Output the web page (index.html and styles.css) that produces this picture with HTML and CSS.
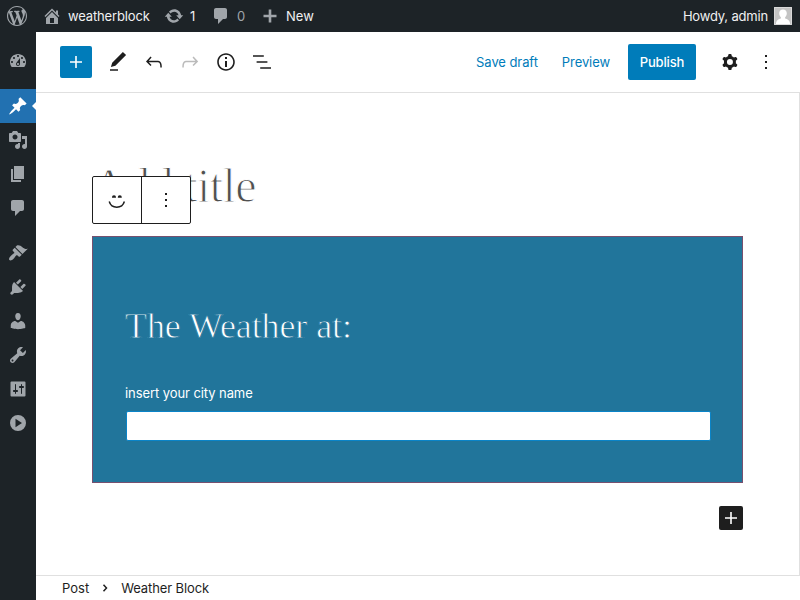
FILE: index.html
```html
<!DOCTYPE html>
<html lang="en">
<head>
<meta charset="utf-8">
<title>Edit Post</title>
<link rel="stylesheet" href="styles.css">
</head>
<body>
<header class="adminbar">
  <svg class="dash wp-logo" viewBox="0 0 20 20"><path d="M20 10c0-5.51-4.49-10-10-10C4.48 0 0 4.49 0 10c0 5.52 4.48 10 10 10 5.51 0 10-4.48 10-10zM7.78 15.37L4.37 6.22c.55-.02 1.17-.08 1.17-.08.5-.06.44-1.13-.06-1.11 0 0-1.45.11-2.37.11-.18 0-.37 0-.58-.01C4.12 2.69 6.87 1.11 10 1.11c2.33 0 4.45.87 6.05 2.34-.68-.11-1.65.39-1.65 1.58 0 .74.45 1.36.9 2.1.35.61.55 1.36.55 2.46 0 1.49-1.4 5-1.4 5l-3.03-8.37c.54-.02.82-.17.82-.17.5-.05.44-1.25-.06-1.22 0 0-1.44.12-2.38.12-.87 0-2.33-.12-2.33-.12-.5-.03-.56 1.2-.06 1.22l.92.08 1.26 3.41zM17.41 10c.24-.64.74-1.87.43-4.25.7 1.29 1.05 2.71 1.05 4.25 0 3.29-1.73 6.24-4.4 7.78.97-2.59 1.94-5.2 2.92-7.78zM6.1 18.09C3.12 16.65 1.11 13.53 1.11 10c0-1.3.23-2.48.72-3.59C3.25 10.3 4.67 14.2 6.1 18.09zm4.03-6.63l2.58 6.98c-.86.29-1.76.45-2.71.45-.79 0-1.57-.11-2.29-.33.81-2.38 1.62-4.74 2.42-7.1z"/></svg>
  <svg class="dash home" viewBox="0 0 20 20"><path fill-rule="evenodd" d="M16 8.5l1.53 1.53-1.06 1.06L10 4.6l-6.47 6.49-1.06-1.06L10 2.5l4 4v-2h2v4zm-6-2.46l6 5.99V18H4v-5.97zM12 17v-5H8v5h4z"/></svg>
  <span class="site">weatherblock</span>
  <svg class="dash update" viewBox="0 0 20 20"><path d="M10.2 3.28c3.53 0 6.43 2.61 6.92 6h2.08l-3.5 4-3.5-4h2.32c-.45-1.97-2.21-3.45-4.32-3.45-1.45 0-2.73.71-3.54 1.78L4.95 5.66C6.23 4.2 8.11 3.28 10.2 3.28zm-.4 13.44c-3.52 0-6.43-2.61-6.92-6H.8l3.5-4c1.17 1.33 2.33 2.67 3.5 4H5.48c.45 1.97 2.21 3.45 4.32 3.45 1.45 0 2.73-.71 3.54-1.78l1.71 1.95c-1.28 1.46-3.15 2.38-5.25 2.38z"/></svg>
  <span class="updates">1</span>
  <svg class="dash comments" viewBox="0 0 20 20"><path d="M5 2h9c1.1 0 2 .9 2 2v7c0 1.1-.9 2-2 2h-2l-5 5v-5H5c-1.1 0-2-.9-2-2V4c0-1.1.9-2 2-2z"/></svg>
  <span class="pending">0</span>
  <svg class="dash add" viewBox="0 0 20 20"><path d="M8.7 3.5h2.6v5.2h5.2v2.6h-5.2v5.2H8.700v-5.200H3.500V8.700h5.200z"/></svg>
  <span class="new">New</span>
  <span class="howdy">Howdy, admin</span>
  <svg class="avatar" viewBox="0 0 18 18"><path fill="#c4c4c4" d="M0 0h18v18H0z"/><path fill="#fff" d="M9 2.500c2.300 0 3.800 1.600 3.800 3.800 0 1.700-.7 3-1.700 3.900v1.300c2.600.5 4.400 1.700 4.900 4.500v1H2v-1c.5-2.800 2.300-4 4.900-4.500v-1.300c-1-.9-1.700-2.200-1.700-3.900 0-2.200 1.500-3.800 3.800-3.800z"/><path fill="none" stroke="#d9d9d9" d="M.5.5h17v17H.5z"/></svg>
</header>
<div class="shell">
  <nav class="sidebar">
    <a class="item"><svg class="dash" viewBox="0 0 20 20"><path fill-rule="evenodd" d="M3.760 16h12.480c1.100-1.370 1.760-3.110 1.760-5 0-4.420-3.580-8-8-8s-8 3.580-8 8c0 1.890.66 3.630 1.760 5zM10 4c.55 0 1 .45 1 1s-.45 1-1 1-1-.45-1-1 .45-1 1-1zM6 6c.55 0 1 .45 1 1s-.45 1-1 1-1-.45-1-1 .45-1 1-1zm8 0c.55 0 1 .45 1 1s-.45 1-1 1-1-.45-1-1 .45-1 1-1zm-5.370 5.550L12 7v6c0 1.100-.9 2-2 2s-2-.9-2-2c0-.57.24-1.080.63-1.450zM4 10c.55 0 1 .45 1 1s-.45 1-1 1-1-.45-1-1 .45-1 1-1zm12 0c.55 0 1 .45 1 1s-.45 1-1 1-1-.45-1-1 .45-1 1-1zm-5 3c0-.55-.45-1-1-1s-1 .45-1 1 .45 1 1 1 1-.45 1-1z"/></svg></a>
    <a class="item group current"><svg class="dash" viewBox="0 0 20 20"><path d="M10.44 3.02l1.82-1.82 6.36 6.35-1.83 1.82c-1.05-.68-2.48-.57-3.41.36l-.75.75c-.92.93-1.04 2.35-.35 3.41l-1.83 1.82-2.41-2.41-2.8 2.79c-.42.42-3.38 2.71-3.8 2.29s1.86-3.39 2.28-3.81l2.79-2.79L4.1 9.36l1.83-1.82c1.05.69 2.48.57 3.4-.36l.75-.75c.93-.92 1.05-2.35.36-3.41z"/></svg></a>
    <a class="item"><svg class="dash" viewBox="0 0 20 20"><path fill-rule="evenodd" d="M13 11V4c0-.55-.45-1-1-1h-1.670L9 1H5L3.670 3H2c-.55 0-1 .45-1 1v7c0 .55.45 1 1 1h10c.55 0 1-.45 1-1zM7 4.500c1.380 0 2.500 1.120 2.500 2.500S8.380 9.500 7 9.500 4.500 8.380 4.500 7 5.620 4.500 7 4.500zM14 6h5v10.500c0 1.380-1.120 2.500-2.500 2.500S14 17.880 14 16.500s1.120-2.500 2.500-2.500c.17 0 .34.02.5.05V9h-3V6zm-4 8.050V13h2v3.500c0 1.380-1.120 2.500-2.500 2.500S7 17.880 7 16.500 8.120 14 9.500 14c.17 0 .34.02.5.05z"/></svg></a>
    <a class="item"><svg class="dash" viewBox="0 0 20 20"><path d="M6 15V2h10v13H6zm-1 1h8v2H3V5h2v11z"/></svg></a>
    <a class="item"><svg class="dash" viewBox="0 0 20 20"><path d="M5 2h9c1.1 0 2 .9 2 2v7c0 1.1-.9 2-2 2h-2l-5 5v-5H5c-1.1 0-2-.9-2-2V4c0-1.1.9-2 2-2z"/></svg></a>
    <a class="item group"><svg class="dash" viewBox="0 0 20 20"><path d="M14.48 11.06L7.41 3.99l1.5-1.5c.5-.56 2.3-.47 3.51.32 1.21.8 1.43 1.28 2.91 2.1 1.18.64 2.45 1.26 4.45.85zm-.71.71L6.7 4.7 4.93 6.47c-.39.39-.39 1.02 0 1.41l1.06 1.06c.39.39.39 1.03 0 1.42-.6.6-1.43 1.11-2.21 1.69-.35.26-.7.53-1.01.84C1.43 14.23.4 16.08 1.4 17.07c.99 1 2.84-.03 4.18-1.36.31-.31.58-.66.85-1.02.57-.78 1.08-1.61 1.69-2.21.39-.39 1.02-.39 1.41 0l1.06 1.06c.39.39 1.02.39 1.41 0z"/></svg></a>
    <a class="item"><svg class="dash" viewBox="0 0 20 20"><path d="M13.11 4.36L9.87 7.6 8 5.73l3.24-3.24c.35-.34 1.05-.2 1.56.32.52.51.66 1.21.31 1.55zm-8 1.77l.91-1.12 9.01 9.01-1.19.84c-.71.71-2.63 1.16-3.82 1.16H6.14L4.9 17.26c-.59.59-1.54.59-2.12 0-.59-.58-.59-1.53 0-2.12l1.24-1.24v-3.88c0-1.13.4-3.19 1.09-3.89zm7.26 3.97l3.24-3.24c.34-.35 1.04-.21 1.55.31.52.51.66 1.21.31 1.55l-3.24 3.25z"/></svg></a>
    <a class="item"><svg class="dash" viewBox="0 0 20 20"><path d="M10 9.250c-2.270 0-2.730-3.440-2.730-3.440C7 4.020 7.820 2 9.970 2c2.160 0 2.980 2.020 2.710 3.810 0 0-.41 3.440-2.680 3.440zm0 2.570L12.720 10c2.390 0 4.520 2.330 4.520 4.530v2.490s-3.650 1.130-7.240 1.130c-3.650 0-7.240-1.130-7.240-1.130v-2.490c0-2.250 1.940-4.480 4.470-4.480z"/></svg></a>
    <a class="item"><svg class="dash" viewBox="0 0 20 20"><path fill-rule="evenodd" d="M16.68 9.77c-1.34 1.34-3.3 1.67-4.95.99l-5.41 6.52c-.99.99-2.59.99-3.58 0s-.99-2.59 0-3.57l6.52-5.42c-.68-1.65-.35-3.61.99-4.95 1.28-1.28 3.12-1.62 4.72-1.06l-2.89 2.89 2.82 2.82 2.86-2.87c.53 1.58.18 3.39-1.08 4.65zM3.81 16.21c.4.39 1.04.39 1.43 0 .4-.4.4-1.04 0-1.43-.39-.4-1.03-.4-1.43 0-.39.39-.39 1.03 0 1.43z"/></svg></a>
    <a class="item"><svg class="dash" viewBox="0 0 20 20"><path fill-rule="evenodd" d="M17.500 16.500v-13a1 1 0 0 0-1-1h-13a1 1 0 0 0-1 1v13a1 1 0 0 0 1 1h13a1 1 0 0 0 1-1zM8 11h1c.55 0 1 .45 1 1s-.45 1-1 1H8v1.500c0 .28-.22.5-.5.5s-.5-.22-.5-.5V13H6c-.55 0-1-.45-1-1s.45-1 1-1h1V5.500c0-.28.22-.5.5-.5s.5.22.5.5V11zm5-2h-1c-.55 0-1-.45-1-1s.45-1 1-1h1V5.500c0-.28.22-.5.5-.5s.5.22.5.5V7h1c.55 0 1 .45 1 1s-.45 1-1 1h-1v5.500c0 .28-.22.5-.5.5s-.5-.22-.5-.5V9z"/></svg></a>
    <a class="item"><svg class="dash" viewBox="0 0 20 20"><path fill-rule="evenodd" d="M10 2a8 8 0 1 1 0 16 8 8 0 0 1 0-16zM7.500 5.800v8.400l6.500-4.200z"/></svg></a>
  </nav>
  <main class="editor">
    <div class="toolbar">
      <button class="inserter"><svg viewBox="0 0 24 24"><path d="M18 11.200h-5.200V6h-1.600v5.200H6v1.600h5.200V18h1.600v-5.200H18z"/></svg></button>
      <svg viewBox="0 0 24 24"><path d="M20.100 5.100L16.900 2 6.200 12.700l-1.300 4.400 4.500-1.300L20.100 5.100zM4 20.800h8v-1.500H4v1.500z"/></svg>
      <svg viewBox="0 0 24 24"><path d="M18.300 11.700c-.6-.6-1.400-.9-2.300-.9H6.700l2.900-3.300-1.100-1-4.500 5L8.500 16l1-1-2.700-2.700H16c.5 0 .9.2 1.300.5 1 1 1 3.400 1 4.500v.3h1.500v-.2c0-1.500 0-4.300-1.500-5.700z"/></svg>
      <svg class="disabled" viewBox="0 0 24 24"><path d="M15.600 6.500l-1.100 1 2.900 3.300H8c-.9 0-1.700.3-2.300.9-1.400 1.500-1.400 4.200-1.400 5.600v.2h1.500v-.3c0-1.100 0-3.500 1-4.500.3-.3.7-.5 1.300-.5h9.200L14.500 15l1.100 1.100 4.600-4.600-4.600-5z"/></svg>
      <svg viewBox="0 0 24 24"><path d="M12 3.200c-4.800 0-8.800 3.900-8.800 8.800 0 4.800 3.900 8.800 8.800 8.800 4.800 0 8.800-3.900 8.800-8.800 0-4.800-4-8.800-8.800-8.800zm0 16c-4 0-7.200-3.300-7.200-7.200C4.800 8 8 4.800 12 4.800s7.200 3.300 7.200 7.200c0 4-3.200 7.200-7.200 7.200zM11 17h2v-6h-2v6zm0-8h2V7h-2v2z"/></svg>
      <svg viewBox="0 0 24 24"><path d="M13.800 5.200H3v1.500h10.800V5.200zm-3.600 12v1.500H21v-1.500H10.200zm7.200-6H6.600v1.500h10.800v-1.500z"/></svg>
      <a class="link save">Save draft</a>
      <a class="link preview">Preview</a>
      <button class="publish">Publish</button>
      <svg class="cog" viewBox="0 0 24 24"><path fill-rule="evenodd" d="M10.289 4.836A1 1 0 0111.275 4h1.306a1 1 0 01.987.836l.244 1.466c.787.26 1.503.679 2.108 1.218l1.393-.522a1 1 0 011.216.437l.653 1.130a1 1 0 01-.23 1.273l-1.148.944a6.025 6.025 0 010 2.435l1.149.946a1 1 0 01.23 1.272l-.653 1.130a1 1 0 01-1.216.437l-1.394-.522c-.605.540-1.320.958-2.108 1.218l-.244 1.466a1 1 0 01-.987.836h-1.306a1 1 0 01-.986-.836l-.244-1.466a5.995 5.995 0 01-2.108-1.218l-1.394.522a1 1 0 01-1.217-.436l-.653-1.131a1 1 0 01.23-1.272l1.149-.946a6.026 6.026 0 010-2.435l-1.148-.944a1 1 0 01-.23-1.272l.653-1.131a1 1 0 011.217-.437l1.393.522a5.994 5.994 0 012.108-1.218l.244-1.466zM14.929 12a3 3 0 11-6 0 3 3 0 016 0z"/></svg>
      <svg viewBox="0 0 24 24"><path d="M13 19h-2v-2h2v2zm0-6h-2v-2h2v2zm0-6h-2V5h2v2z"/></svg>
    </div>
    <div class="canvas">
      <h1 class="title">Add title</h1>
      <div class="block-tools">
        <div class="tool"><svg viewBox="0 0 24 24"><path fill="none" stroke="#1e1e1e" stroke-width="1.500" d="M4.200 13.500c1.200 3.900 4 5.700 7.600 5.700s6.400-1.800 7.600-5.700"/><path d="M7 9.800c0-1.700.7-2.500 2-2.500s2 .8 2 2.500zm5.800 0c0-1.700.7-2.500 2-2.500s2 .8 2 2.500z"/></svg></div>
        <div class="tool"><svg viewBox="0 0 24 24"><path d="M13 19h-2v-2h2v2zm0-6h-2v-2h2v2zm0-6h-2V5h2v2z"/></svg></div>
      </div>
      <section class="weather">
        <h2 class="heading">The Weather at:</h2>
        <label class="label" for="city">insert your city name</label>
        <input class="city" id="city" type="text">
      </section>
      <button class="appender"><svg viewBox="0 0 24 24"><path d="M18 11.200h-5.200V6h-1.600v5.200H6v1.600h5.200V18h1.600v-5.200H18z"/></svg></button>
    </div>
    <footer class="crumbs">
      <span class="post">Post</span>
      <svg viewBox="0 0 6 8"><path fill="none" stroke="#1e1e1e" stroke-width="1.500" d="M1.500 .8L4.500 4l-3 3.200"/></svg>
      <span class="block-name">Weather Block</span>
    </footer>
  </main>
</div>
</body>
</html>
```
FILE: styles.css
```css
* { box-sizing: border-box; }
body {
  margin: 0;
  width: 800px;
  height: 600px;
  overflow: hidden;
  display: flex;
  flex-direction: column;
  background: #fff;
  color: #1e1e1e;
  font: 13px/20px Inter, "Liberation Sans", sans-serif;
}
svg { display: block; flex: none; width: 24px; height: 24px; fill: currentColor; }
button { border: 0; padding: 0; font: inherit; color: #fff; }
.dash { width: 20px; height: 20px; color: #a0a5aa; }

.adminbar {
  height: 32px;
  flex: none;
  display: flex;
  align-items: center;
  background: #1d2327;
  color: #f0f0f1;
  padding: 0 8px 0 7px;
  white-space: nowrap;
}
.home { margin-left: 15px; }
.site { margin-left: 6px; width: 82px; letter-spacing: -0.15px; }
.update { margin-left: 14px; }
.updates { margin-left: 6px; width: 8px; }
.comments { margin-left: 13px; }
.pending { margin-left: 6px; width: 9px; color: #a0a5aa; }
.add { margin-left: 14px; }
.new { margin-left: 6px; }
.howdy { margin-left: auto; letter-spacing: -0.18px; }
.avatar { width: 18px; height: 18px; margin-left: 6px; }

.shell { flex: 1; display: flex; min-height: 0; }
.sidebar { width: 36px; padding-top: 12px; background: #1d2327; }
.item { display: flex; align-items: center; height: 34px; padding-left: 7.5px; }
.group { margin-top: 11px; }
.current { position: relative; background: #2271b1; }
.current .dash { color: #fff; }
.current::after {
  content: "";
  position: absolute;
  right: 0;
  top: 13px;
  border: 4px solid transparent;
  border-left: 0;
  border-right-color: #fff;
}

.editor { flex: 1; display: flex; flex-direction: column; min-width: 0; }
.toolbar {
  height: 61px;
  flex: none;
  display: flex;
  align-items: center;
  gap: 12px;
  padding: 0 22px 0 24px;
  border-bottom: 1px solid #e0e0e0;
}
.inserter {
  width: 32px;
  height: 32px;
  padding: 4px;
  margin-right: 2px;
  border-radius: 2px;
  background: #007cba;
}
.disabled { color: #bbb; }
.link { color: #007cba; letter-spacing: -0.08px; }
.save { margin-left: auto; }
.preview { margin-left: 12px; }
.publish {
  width: 68px;
  height: 36px;
  margin-left: 6px;
  border-radius: 2px;
  background: #007cba;
  font-weight: 500;
  letter-spacing: -0.15px;
}
.cog { margin-left: 10px; }

.canvas {
  flex: 1;
  display: flex;
  flex-direction: column;
  padding: 66px 56px 0 56px;
  border-right: 1px solid #e0e0e0;
  position: relative;
}
.title, .heading {
  margin: 0;
  font-family: "Liberation Serif", serif;
  font-weight: 400;
  white-space: nowrap;
}
.title {
  height: 77px;
  font-size: 48px;
  line-height: 54px;
  letter-spacing: -0.6px;
  color: #505050;
  -webkit-text-stroke: 1.1px #fff;
}
.block-tools {
  position: absolute;
  left: 56px;
  top: 83px;
  width: 99px;
  height: 48px;
  display: flex;
  background: #fff;
  border: 1px solid #1e1e1e;
  border-radius: 2px;
}
.tool { flex: 1; display: flex; align-items: center; justify-content: center; }
.tool + .tool { border-left: 1px solid #1e1e1e; }
.weather {
  height: 247px;
  display: flex;
  flex-direction: column;
  padding: 66px 32px 0;
  background: #21759b;
  border: 1px solid #77506f;
  color: #fff;
}
.heading {
  height: 80px;
  font-size: 36px;
  line-height: 46px;
  letter-spacing: -0.1px;
  -webkit-text-stroke: 0.8px #21759b;
}
.label { line-height: 20px; letter-spacing: -0.08px; }
.city {
  height: 30px;
  margin: 8px -1px 0 1px;
  border: 1px solid #0a84c8;
  border-radius: 2px;
  background: #fff;
}
.appender {
  align-self: flex-end;
  width: 24px;
  height: 24px;
  margin-top: 23px;
  border-radius: 2px;
  background: #1e1e1e;
}
.crumbs {
  height: 25px;
  flex: none;
  display: flex;
  align-items: center;
  padding-left: 26px;
  border-top: 1px solid #e0e0e0;
}
.crumbs svg { width: 6px; height: 8px; margin: 0 13px; }
.block-name { letter-spacing: -0.1px; }
```
